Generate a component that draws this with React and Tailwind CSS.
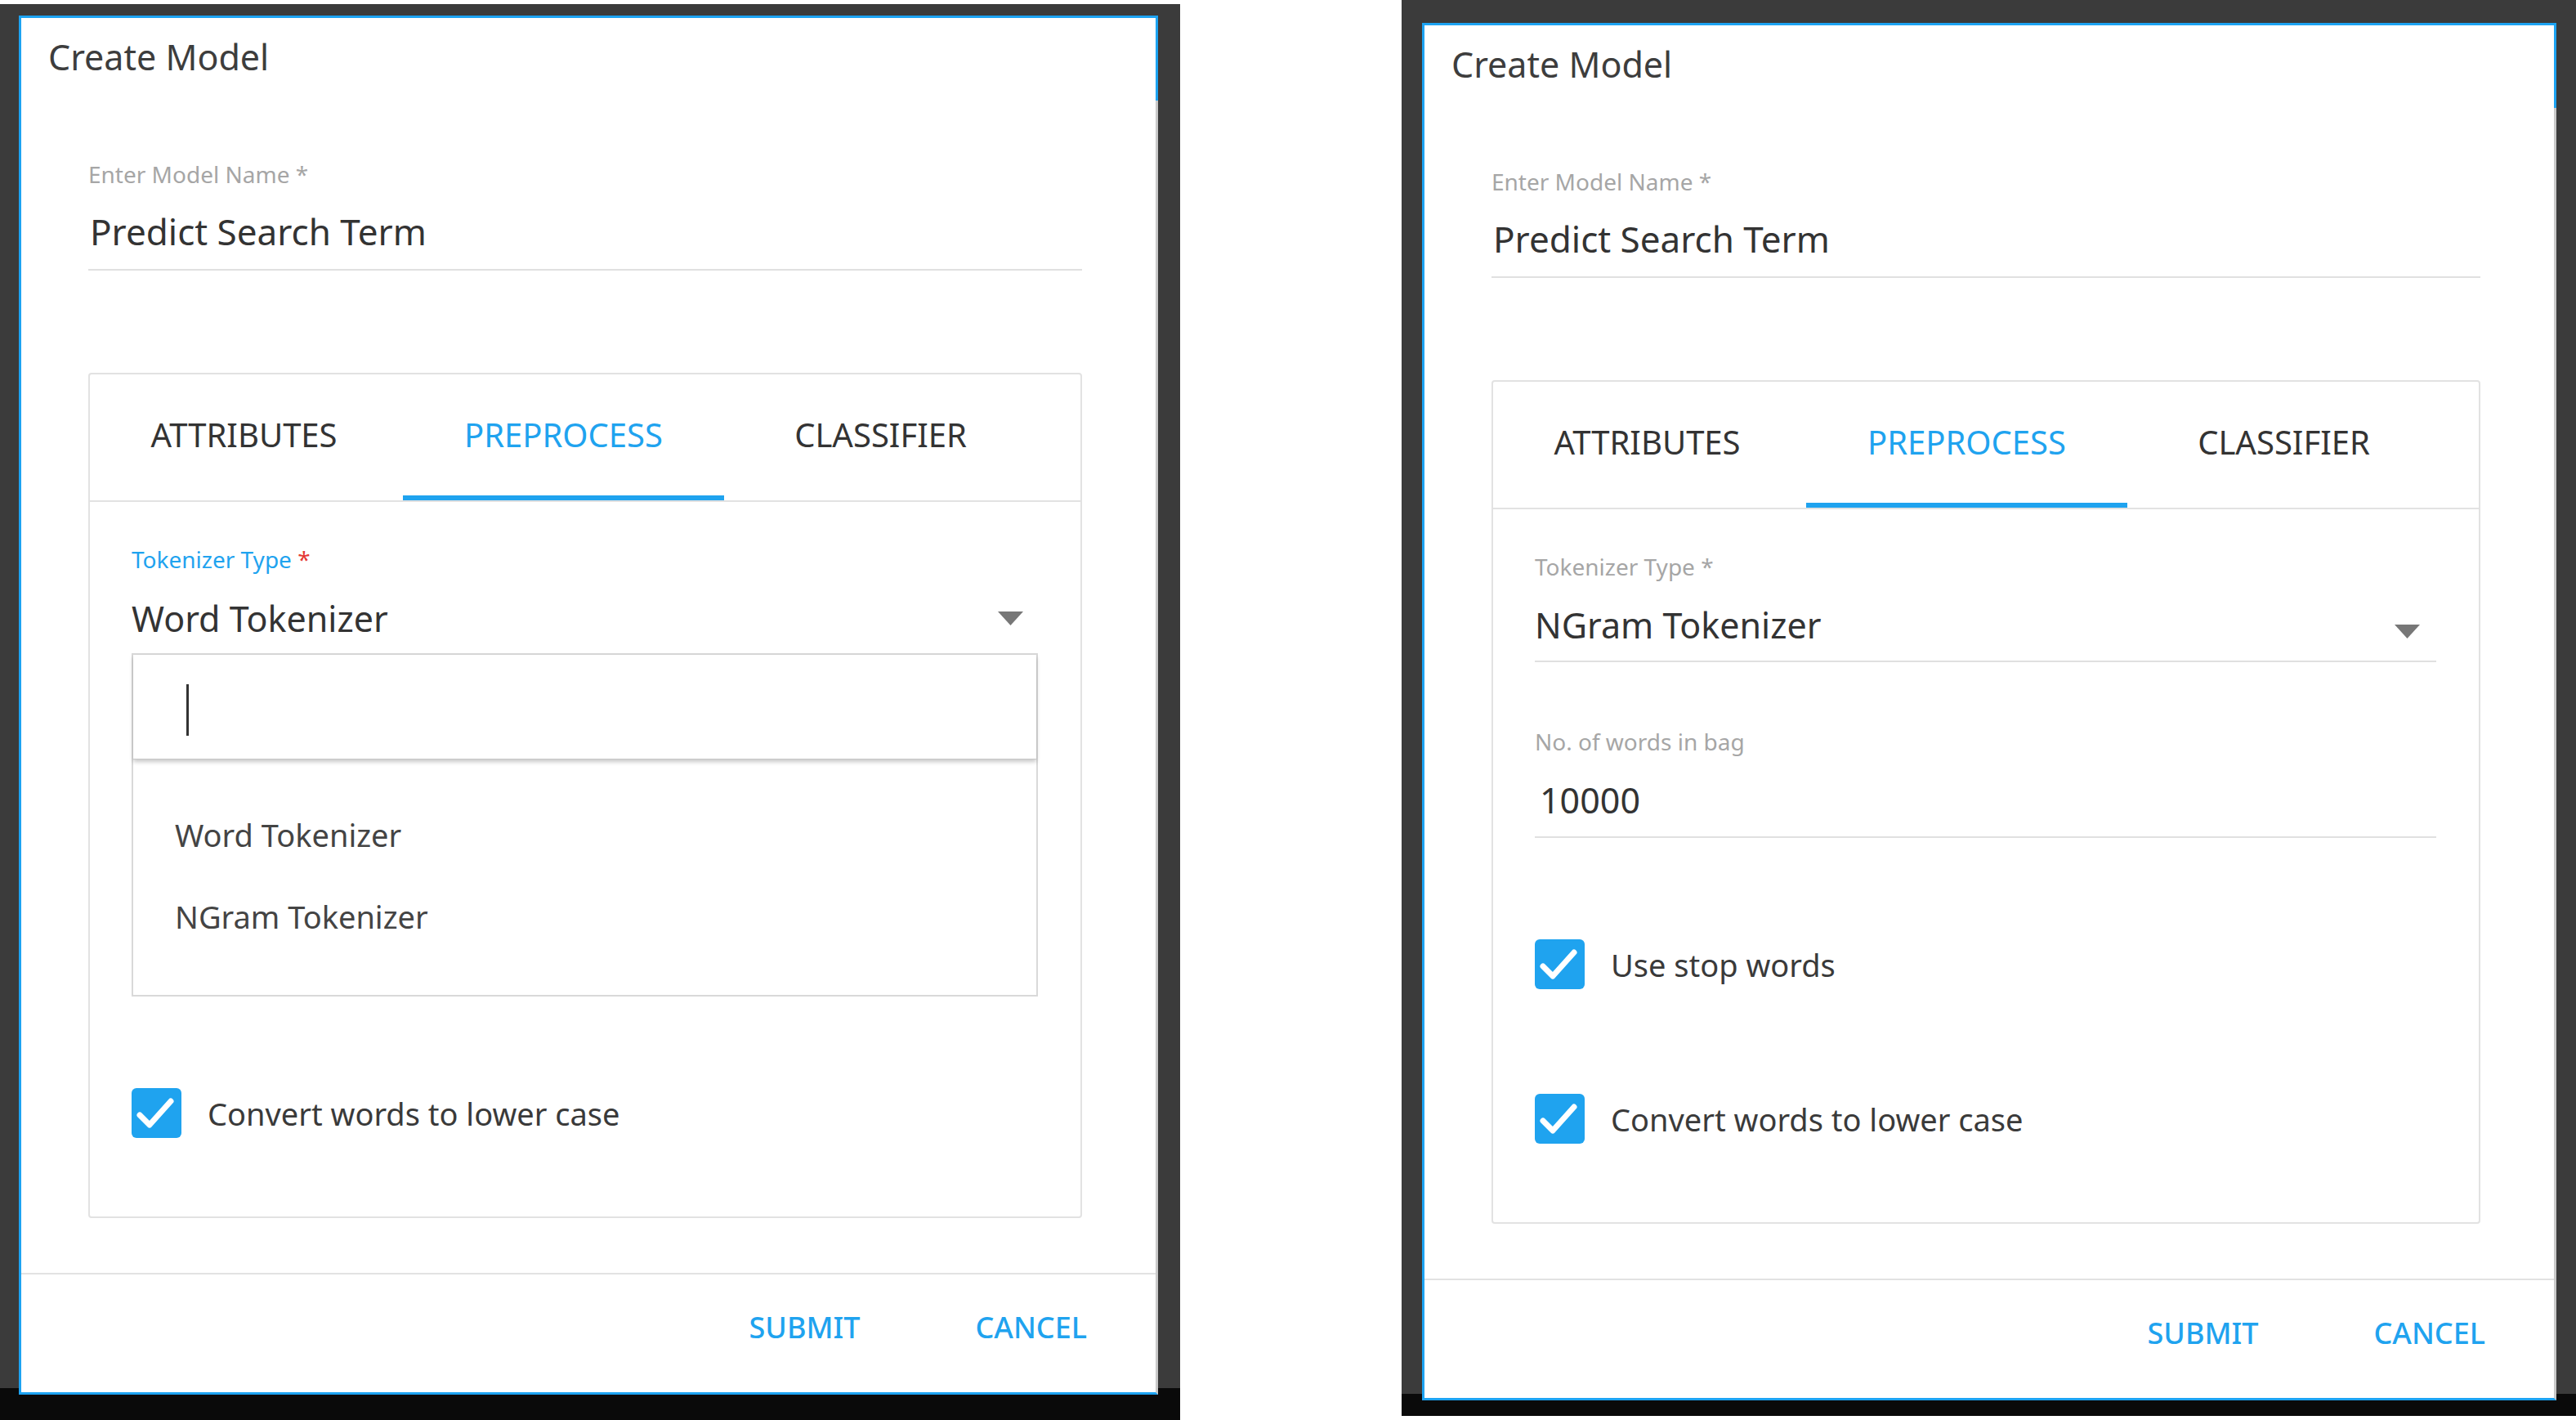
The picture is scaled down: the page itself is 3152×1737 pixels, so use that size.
import React from 'react';

const BLUE = 'text-[#1fa3ef]';

const Arrow = ({ className }) => (
  <svg width="31" height="17" viewBox="0 0 31 17" className={className}>
    <path d="M0 0 L31 0 L15.5 17 Z" fill="#777777" />
  </svg>
);

const Checkbox = ({ label }) => (
  <div className="flex items-center gap-[32px]">
    <span className="w-[61px] h-[61px] rounded-[6px] bg-[#1fa3ef] flex items-center justify-center">
      <svg width="61" height="61" viewBox="0 0 61 61" fill="none">
        <path d="M10 33 L22 45 L48 16" stroke="white" strokeWidth="7" strokeLinecap="round" strokeLinejoin="round" />
      </svg>
    </span>
    <span className="text-[38px] leading-[38px] text-[#3a3a3a]">{label}</span>
  </div>
);

const Tabs = () => {
  const tabs = [
    { name: 'ATTRIBUTES', w: 'w-[377px]' },
    { name: 'PREPROCESS', w: 'w-[393px] ml-[6px]', active: true },
    { name: 'CLASSIFIER', w: 'w-[383px]' },
  ];
  return (
    <div className="flex border-b-2 border-[#e2e2e2]">
      {tabs.map((t) => (
        <div key={t.name} className={`${t.w} h-[154px] flex flex-col`}>
          <div className={`flex-1 flex items-center justify-center text-[40px] leading-[40px] ${t.active ? BLUE : 'text-[#333333]'}`}>
            {t.name}
          </div>
          <div className={`h-[6px] ${t.active ? 'bg-[#1fa3ef]' : ''}`} />
        </div>
      ))}
    </div>
  );
};

const Dialog = ({ width, children }) => (
  <div className={`relative ${width} bg-white border-[3px] border-[#1da3f2] border-r-[#c9c9c9] flex flex-col`}>
    {/* focus outline only reaches part of the right edge */}
    <span className="absolute -right-[3px] -top-[3px] w-[3px] h-[104px] bg-[#1da3f2]" />

    <div className="pt-[25px] pl-[33px]">
      <h2 className="text-[43px] leading-[46px] text-[#3d3d3d]">Create Model</h2>
    </div>

    <div className="pl-[82px] pr-[90px]">
      <p className="mt-[106px] text-[28px] leading-[29px] text-[#a6a6a6]">Enter Model Name *</p>
      <p className="mt-[34px] pl-[2px] text-[44px] leading-[43px] text-[#333333]">Predict Search Term</p>
      <div className="mt-[24px] h-[2px] bg-[#e0e0e0]" />

      <div className="mt-[125px] border-2 border-[#e2e2e2] rounded-[4px]">
        <Tabs />
        <div className="pt-[56px] pl-[51px] pr-[52px] pb-[96px]">{children}</div>
      </div>
    </div>

    <div className="mt-[67px] border-t-2 border-[#e2e2e2] pt-[46px] pb-[61px] pr-[84px] flex justify-end gap-[141px]">
      <button className={`text-[36px] leading-[37px] font-medium ${BLUE}`}>SUBMIT</button>
      <button className={`text-[36px] leading-[37px] font-medium ${BLUE}`}>CANCEL</button>
    </div>
  </div>
);

const WordTokenizerForm = () => (
  <>
    <p className={`text-[28px] leading-[29px] ${BLUE}`}>
      Tokenizer Type <span className="text-[#e53935]">*</span>
    </p>
    <div className="mt-[36px] flex items-center justify-between">
      <span className="text-[43px] leading-[43px] text-[#333333]">Word Tokenizer</span>
      <Arrow className="mr-[18px]" />
    </div>

    {/* open select menu */}
    <div className="mt-[21px] border-2 border-[#d9d9d9]">
      <div className="h-[128px] bg-white border-b border-[#c8c8c8] shadow-[0_3px_5px_rgba(0,0,0,0.22)] pl-[65px] pt-[36px]">
        <span className="block w-[3px] h-[63px] bg-[#333333]" />
      </div>
      <ul className="pt-[42px] pb-[46px] pl-[51px] text-[38px] text-[#444444]">
        <li className="h-[100px] leading-[100px]">Word Tokenizer</li>
        <li className="h-[100px] leading-[100px]">NGram Tokenizer</li>
      </ul>
    </div>

    <div className="mt-[112px]">
      <Checkbox label="Convert words to lower case" />
    </div>
  </>
);

const NGramTokenizerForm = () => (
  <>
    <p className="text-[28px] leading-[29px] text-[#a6a6a6]">Tokenizer Type *</p>
    <div className="mt-[35px] flex items-center justify-between">
      <span className="text-[43px] leading-[43px] text-[#333333]">NGram Tokenizer</span>
      <Arrow className="mr-[20px] translate-y-[8px]" />
    </div>
    <div className="mt-[22px] h-[2px] bg-[#e0e0e0]" />

    <p className="mt-[83px] text-[28px] leading-[29px] text-[#a6a6a6]">No. of words in bag</p>
    <p className="mt-[35px] pl-[6px] text-[43px] leading-[43px] text-[#333333]">10000</p>
    <div className="mt-[23px] h-[2px] bg-[#e0e0e0]" />

    <div className="mt-[124px]">
      <Checkbox label="Use stop words" />
    </div>
    <div className="mt-[128px]">
      <Checkbox label="Convert words to lower case" />
    </div>
  </>
);

export default function App() {
  return (
    <div className="w-[3152px] h-[1737px] bg-white flex overflow-hidden [font-family:'Noto_Sans',Lato,sans-serif]">
      <div className="w-[1444px] h-[1737px] pt-[5px] shrink-0">
        <div className="h-full pl-[23px] pt-[14px] bg-[linear-gradient(to_bottom,#3b3b3b_1693px,#0a0a0a_1693px)]">
          <Dialog width="w-[1394px]">
            <WordTokenizerForm />
          </Dialog>
        </div>
      </div>

      <div className="ml-[271px] w-[1437px] h-[1732px] shrink-0 pl-[25px] pt-[28px] bg-[linear-gradient(to_bottom,#3b3b3b_1705px,#0a0a0a_1705px)]">
        <Dialog width="w-[1388px]">
          <NGramTokenizerForm />
        </Dialog>
      </div>
    </div>
  );
}
